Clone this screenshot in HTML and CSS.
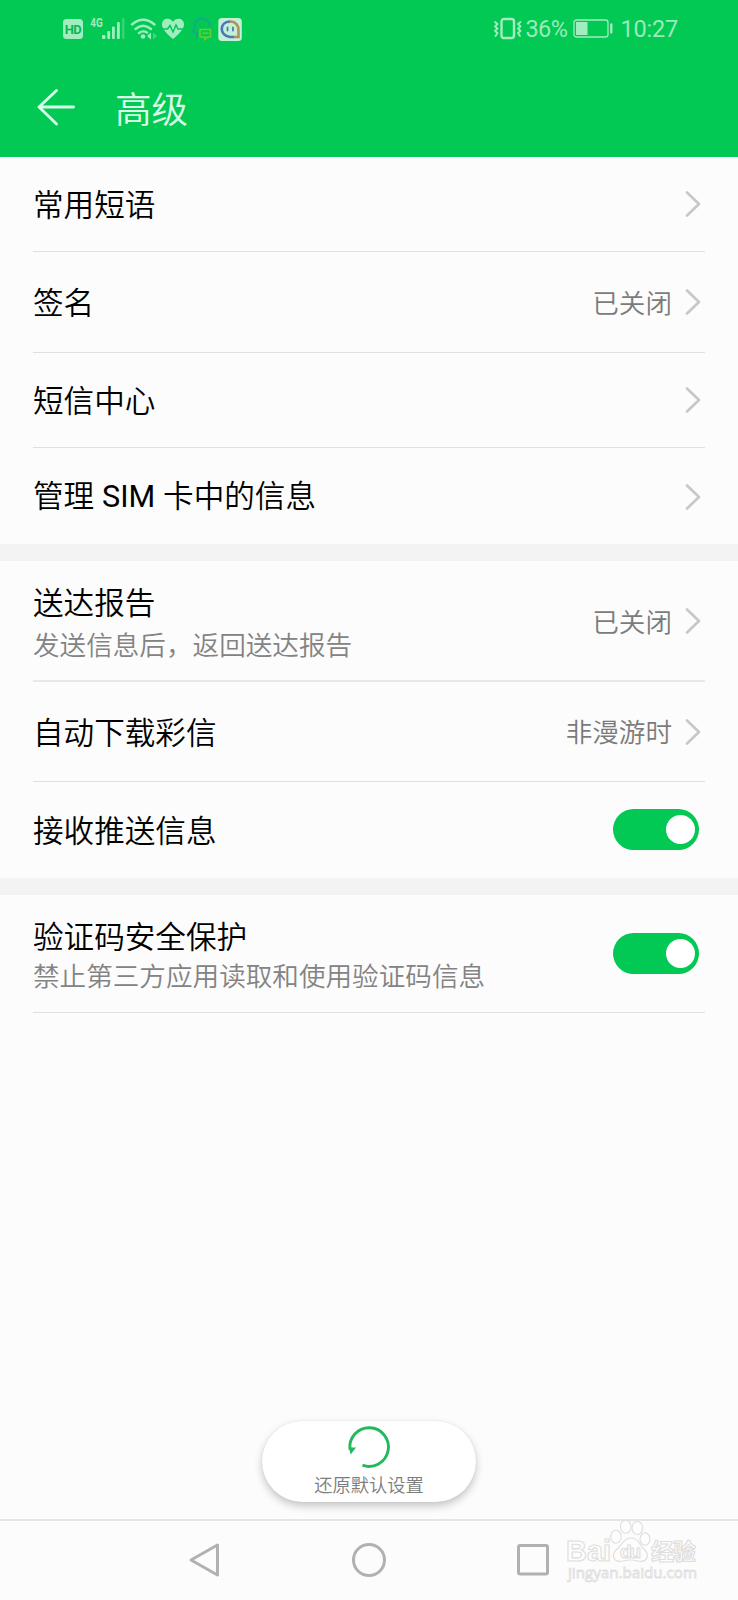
FILE: index.html
```html
<!DOCTYPE html>
<html lang="zh-CN">
<head>
<meta charset="utf-8">
<title>高级</title>
<link rel="stylesheet" href="styles.css">
</head>
<body>
<div class="screen">
  <header class="header">
    <div class="status">
      <svg class="status-left" width="180" height="26" viewBox="0 0 180 26">
        <g class="soft">
          <path class="solid" fill-rule="evenodd" d="M4 3H16.500a3.500 3.500 0 0 1 3.500 3.500V19.500a3.500 3.500 0 0 1-3.500 3.500H3.500a3.500 3.500 0 0 1-3.500-3.500V6.500A3.500 3.500 0 0 1 3.500 3Z"/>
          <text class="hd" x="1.700" y="17.800" textLength="17">HD</text>
          <text class="net" x="27.300" y="11.300" textLength="12.500" lengthAdjust="spacingAndGlyphs">4G</text>
          <g class="solid"><rect x="39" y="19" width="3.500" height="4" rx="1"/><rect x="44.300" y="15" width="2.800" height="8" rx="1"/><rect x="49" y="10.500" width="2.800" height="12.500" rx="1"/><rect x="54" y="6" width="2.800" height="17" rx="1"/><rect x="59" y="2" width="2.500" height="21" rx="1" opacity=".3"/></g>
          <g class="line" stroke-width="2.400"><path d="M69 8.500Q80 -1 91.500 8.500M72.500 13Q80 6.500 88 13M76 17Q80 14 84 16.500"/></g>
          <circle class="solid" cx="80" cy="20.500" r="2.300"/>
          <path class="solid" d="M84 20l4-3.500v7z"/><path class="solid" opacity=".4" d="M90 16.500l4 3.500-4 3.500z"/>
          <path class="solid" d="M110 23C104 18 99 13 99 8.500C99 2 107 1 110 6C113 1 121 2 121 8.500C121 13 116 18 110 23Z"/>
          <path class="pulse" d="M99 13H104.500L107 9.500L110 16L113 9L115 13H121"/>
        </g>
        <path class="qhead" d="M134 22.500V17.500L130 15.500Q132 12 132 9C133 .5 145 .5 146.500 8V11"/>
        <path class="qchat" d="M137 13.500H147.500V21H144.500L142 23.500V21H137Z M139.500 17.300h6"/>
        <rect class="tile" x="155.300" y="2" width="23.500" height="23" rx="3.500"/>
        <path class="blue" d="M171 21H167C156 20 156 6 167 5.500"/>
        <path class="orange" d="M167 5.500C173 5.500 176 10 175.500 15V21H171"/>
        <path class="eyes" d="M164.500 11.500v3M170 11.500v3"/>
      </svg>
      <div class="status-right">
        <svg width="28" height="24" viewBox="0 0 28 24" class="soft">
          <g class="line"><rect x="7.500" y="2" width="12.500" height="19" rx="2.500" stroke-width="2.400"/><path stroke-width="1.800" d="M1 5l2.500 2L1 9.500l2.500 2L1 14l2.500 2L1.500 19M26.500 5L24 7l2.500 2.500L24 11.500l2.500 2.500L24 16l2 3"/></g>
        </svg>
        <span class="battery-text">36%</span>
        <svg class="battery" width="40" height="22" viewBox="0 0 40 22"><rect class="line" x="1" y="2" width="34" height="17" rx="2.500" stroke-width="1.300"/><rect class="solid" x="3" y="4" width="11.500" height="13"/><path class="line" stroke-width="2.300" d="M38.300 6.500v8"/></svg>
        <span class="time">10:27</span>
      </div>
    </div>
    <div class="appbar">
      <svg width="40" height="40" viewBox="0 0 40 40"><path class="back" d="M20.500 3.500L3 20L20.500 37M3 20H37.500"/></svg>
      <h1 class="title">高级</h1>
    </div>
  </header>

  <main class="content">
    <section class="group">
      <div class="row r1"><div class="name">常用短语</div><svg class="chevron" viewBox="0 0 16 28"><path d="M2 2.500L14 14L2 25.500"/></svg></div>
      <div class="row r2"><div class="name">签名</div><div class="value">已关闭</div><svg class="chevron" viewBox="0 0 16 28"><path d="M2 2.500L14 14L2 25.500"/></svg></div>
      <div class="row r3"><div class="name">短信中心</div><svg class="chevron" viewBox="0 0 16 28"><path d="M2 2.500L14 14L2 25.500"/></svg></div>
      <div class="row r4"><div class="name">管理 <span class="latin">SIM</span> 卡中的信息</div><svg class="chevron" viewBox="0 0 16 28"><path d="M2 2.500L14 14L2 25.500"/></svg></div>
    </section>
    <section class="group">
      <div class="row r5"><div class="stack"><div class="name">送达报告</div><div class="desc">发送信息后，返回送达报告</div></div><div class="value">已关闭</div><svg class="chevron" viewBox="0 0 16 28"><path d="M2 2.500L14 14L2 25.500"/></svg></div>
      <div class="row r6"><div class="name">自动下载彩信</div><div class="value">非漫游时</div><svg class="chevron" viewBox="0 0 16 28"><path d="M2 2.500L14 14L2 25.500"/></svg></div>
      <div class="row r7"><div class="name">接收推送信息</div><div class="toggle"><span class="knob"></span></div></div>
    </section>
    <section class="group last">
      <div class="row r8"><div class="stack tight"><div class="name">验证码安全保护</div><div class="desc">禁止第三方应用读取和使用验证码信息</div></div><div class="toggle"><span class="knob"></span></div></div>
    </section>
    <button class="reset">
      <svg width="46" height="46" viewBox="0 0 46 46"><path class="arc" d="M4 25.500A19.300 19.300 0 1 1 16.500 41.200"/><path class="tip" d="M2.700 23.500H10L4.700 30.500Z"/></svg>
      <span class="reset-label">还原默认设置</span>
    </button>
  </main>

  <nav class="nav">
    <svg width="36" height="40" viewBox="0 0 36 40"><path d="M4 20L30.500 5V35Z"/></svg>
    <svg width="36" height="40" viewBox="0 0 36 40"><circle cx="18" cy="20" r="15.500"/></svg>
    <svg width="36" height="40" viewBox="0 0 36 40"><rect x="3.500" y="5.500" width="29" height="28.500" rx="1.500"/></svg>
  </nav>

  <svg class="watermark" width="140" height="68" viewBox="0 0 140 68">
    <text class="wm-latin" x="1" y="43" textLength="45" lengthAdjust="spacingAndGlyphs">Bai</text>
    <ellipse cx="51" cy="18.700" rx="5.300" ry="6.500"/><ellipse cx="60.700" cy="8.700" rx="5.300" ry="6.500"/><ellipse cx="72.300" cy="10" rx="5.300" ry="6.500"/><ellipse cx="80" cy="21" rx="5" ry="6.300"/>
    <path d="M66 20C73 20 74 26 79 31C86 38 81 45 73 43Q66 41 58 43C48 45 46 37 52 31C58 26 59 20 66 20Z"/>
    <text class="wm-du" x="55" y="39.500" textLength="21">du</text>
    <text class="wm-cn" x="86" y="42" textLength="45">经验</text>
    <text class="wm-url" x="3" y="60" textLength="129" lengthAdjust="spacingAndGlyphs">jingyan.baidu.com</text>
  </svg>
</div>
</body>
</html>
```
FILE: styles.css
```css
* { box-sizing: border-box; }
body { margin: 0; font-family: "Noto Sans CJK SC", sans-serif; }
.screen { position: relative; width: 738px; height: 1600px; display: flex; flex-direction: column; background: #fcfcfc; overflow: hidden; }

.header { height: 157px; background: #02c953; }
.status { height: 58px; padding: 0 60px 1px 63px; display: flex; align-items: center; justify-content: space-between; }
.status-left { margin-top: 1px; }
.status-right { display: flex; align-items: center; color: #9beabb; font: 400 23.500px Roboto, sans-serif; }
.battery-text { margin-left: 3px; width: 46px; letter-spacing: -.6px; }
.battery { margin: 0 7px 0 2px; }
.time { letter-spacing: -.2px; }
.solid { fill: #a2edc0; }
.line { fill: none; stroke: #a2edc0; stroke-linecap: round; stroke-linejoin: round; }
.hd { font: 700 13px Roboto, sans-serif; fill: #04b94e; }
.net { font: 700 12.500px Roboto, sans-serif; fill: #a2edc0; }
.pulse { fill: none; stroke: #02c953; stroke-width: 1.500; }
.qhead { fill: none; stroke: #16a88d; stroke-width: 1.800; }
.qchat { fill: none; stroke: #70cd28; stroke-width: 1.500; }
.tile { fill: #c3f1d5; }
.blue, .orange, .eyes { fill: none; stroke: #5074b8; stroke-width: 2.600; }
.orange { stroke: #b3915f; }
.eyes { stroke-width: 1.800; stroke-linecap: round; }

.appbar { height: 99px; padding: 0 36px 1px; display: flex; align-items: center; gap: 39px; }
.back { fill: none; stroke: #d5ffe9; stroke-width: 2.900; stroke-linecap: round; stroke-linejoin: round; }
.title { margin: 2px 0 0; color: #d9ffe9; font-size: 36.500px; font-weight: 350; line-height: 50px; }

.content { position: relative; flex: 1; display: flex; flex-direction: column; align-items: center; }
.group { width: 738px; padding: 0 33px; border-bottom: 17px solid #f3f3f3; }
.group.last { border-bottom: 0; }
.row { display: flex; align-items: center; border-bottom: 1px solid #e0e0e0; padding-right: 4px; }
.r1 { height: 95px; }
.r2 { height: 101px; }
.r3 { height: 95px; }
.r4 { height: 96px; border-bottom: 0; padding-top: 1px; }
.r5 { height: 121px; border-bottom: 2px solid #e8e8e8; padding-top: 1px; }
.r6 { height: 100px; }
.r7 { height: 96px; border-bottom: 0; padding-bottom: 1px; }
.r8 { height: 118px; }
.name { flex: 1; margin-top: -2px; color: #000; font-size: 30.600px; font-weight: 350; line-height: 42px; white-space: nowrap; }
.latin { font-family: Roboto, sans-serif; font-weight: 400; margin: 0 1px; }
.stack { flex: 1; padding-top: 4px; }
.desc { color: #838383; font-size: 26.600px; font-weight: 350; line-height: 43px; white-space: nowrap; }
.tight { padding-top: 1px; }
.tight .desc { line-height: 37px; }
.value { color: #7b7b7b; font-size: 26.600px; font-weight: 350; line-height: 40px; margin: -1px 13px 0 0; }
.chevron { width: 16px; height: 28px; fill: none; stroke: #c8c8c8; stroke-width: 2.700; stroke-linecap: round; stroke-linejoin: round; }
.toggle { width: 86px; height: 41px; margin-right: 2px; padding-right: 4px; border-radius: 21px; background: #02c953; display: flex; align-items: center; justify-content: flex-end; }
.knob { width: 29px; height: 29px; border-radius: 50%; background: #fff; }

.reset { margin: auto 0 17px; width: 214px; height: 81px; border: 0; border-radius: 41px; padding: 3px 0 0; background: #fff; box-shadow: 0 4px 8px rgba(0,0,0,.22), 0 0 2px rgba(0,0,0,.08); display: flex; flex-direction: column; align-items: center; font-family: inherit; }
.arc { fill: none; stroke: #20b95c; stroke-width: 2.900; }
.tip { fill: #20b95c; }
.reset-label { color: #7d7d7d; font-size: 18.300px; font-weight: 350; line-height: 28px; }

.nav { height: 81px; border-top: 2px solid #e5e5e5; padding: 0 187px 2px 187px; display: flex; align-items: center; justify-content: space-between; }
.nav svg { fill: none; stroke: #b1b1b1; stroke-width: 3; stroke-linejoin: round; }

.watermark { position: absolute; left: 565px; top: 1518px; fill: #fdfdfd; stroke: #dedede; stroke-width: 1.100; }
.wm-latin, .wm-du { font: 700 29px "Liberation Sans", sans-serif; }
.wm-du { font-size: 19px; }
.wm-cn { font: 700 23px "Noto Sans CJK SC", sans-serif; }
.wm-url { font: 400 15px "Open Sans", sans-serif; stroke-width: .8; }
```
